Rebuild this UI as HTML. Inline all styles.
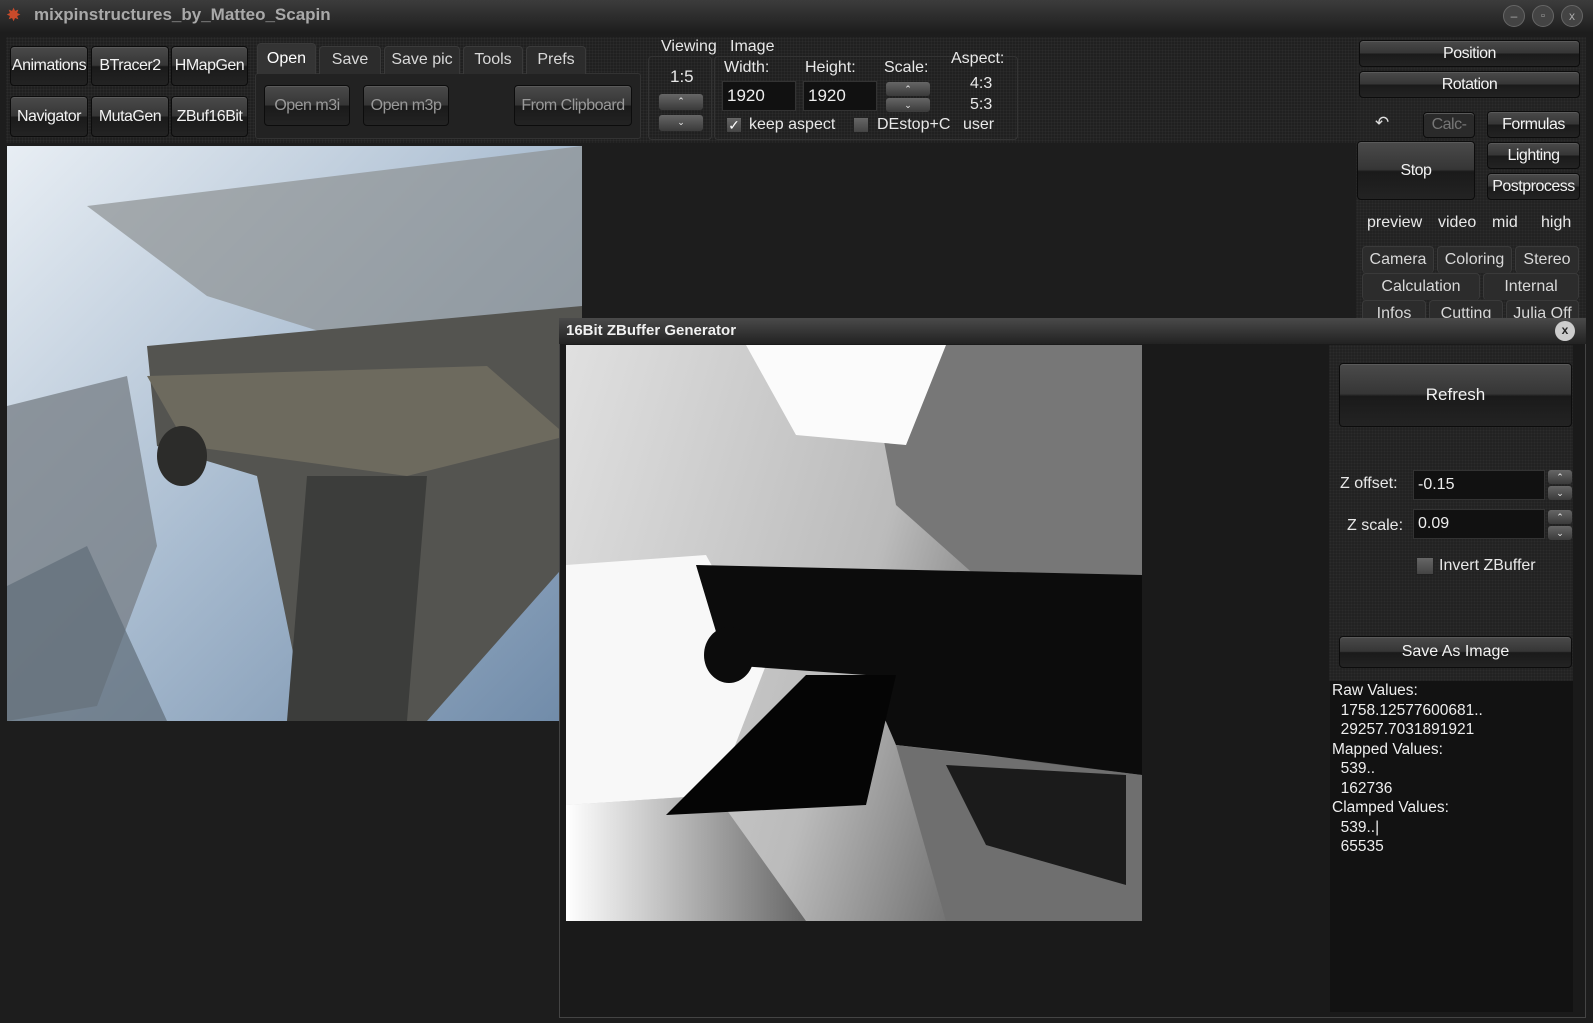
<!DOCTYPE html>
<html><head><meta charset="utf-8"><style>
*{box-sizing:border-box;margin:0;padding:0}
body{width:1593px;height:1023px;background:#1d1d1d;font-family:"Liberation Sans",sans-serif;color:#e8e8e8;position:relative;overflow:hidden;font-size:16px}
.a{position:absolute}
.btn{position:absolute;border:1px solid #0c0c0c;border-radius:4px;background:linear-gradient(#4a4a4a,#363636 48%,#1a1a1a 52%,#232323);color:#f2f2f2;text-align:center;font-size:16px;letter-spacing:-0.5px;box-shadow:inset 0 1px 0 #5a5a5a}
.dis{color:#8a8a8a}
.tab{position:absolute;background:#2c2c2c;border:1px solid #3a3a3a;border-bottom:none;border-radius:4px 4px 0 0;text-align:center;color:#d8d8d8;font-size:16px}
.inp{position:absolute;background:#111;border:1px solid #333;color:#eee;font-size:17px;padding-left:4px}
.pane{position:absolute;background:#232323;background-image:radial-gradient(#2b2b2b 1px,transparent 1px);background-size:3px 3px}
.sp{position:absolute;width:44px;height:14px;border-radius:3px;background:linear-gradient(#666,#3a3a3a);color:#eee;font-size:9px;text-align:center;line-height:14px}
.cb{position:absolute;width:16px;height:16px;background:linear-gradient(#666,#444);border:1px solid #222}
</style></head><body>
<!-- title bar -->
<div class="a" style="left:0;top:0;width:1593px;height:32px;background:linear-gradient(#3c3c3c,#1e1e1e)"></div>
<div class="a" style="left:6px;top:6px;width:20px;height:18px;color:#c84a2a;font-size:18px;line-height:18px">✸</div>
<div class="a" style="left:34px;top:5px;font-size:17px;font-weight:bold;color:#a9a9a9">mixpinstructures_by_Matteo_Scapin</div>
<div class="a" style="left:1503px;top:5px;width:22px;height:22px;border-radius:11px;background:#444;border:1px solid #666;color:#aaa;font-size:12px;text-align:center;line-height:20px">–</div>
<div class="a" style="left:1532px;top:5px;width:22px;height:22px;border-radius:11px;background:#444;border:1px solid #666;color:#aaa;font-size:11px;text-align:center;line-height:20px">▫</div>
<div class="a" style="left:1561px;top:5px;width:22px;height:22px;border-radius:11px;background:#444;border:1px solid #666;color:#aaa;font-size:12px;text-align:center;line-height:20px">x</div>
<!-- toolbar -->
<div class="pane" style="left:6px;top:37px;width:1350px;height:106px;background-color:#202020"></div>
<div class="btn" style="left:10px;top:46px;width:78px;height:40px;line-height:38px">Animations</div>
<div class="btn" style="left:91px;top:46px;width:78px;height:40px;line-height:38px">BTracer2</div>
<div class="btn" style="left:171px;top:46px;width:77px;height:40px;line-height:38px">HMapGen</div>
<div class="btn" style="left:10px;top:96px;width:78px;height:41px;line-height:39px">Navigator</div>
<div class="btn" style="left:91px;top:96px;width:78px;height:41px;line-height:39px">MutaGen</div>
<div class="btn" style="left:171px;top:96px;width:77px;height:41px;line-height:39px">ZBuf16Bit</div>
<div class="a" style="left:255px;top:73px;width:386px;height:66px;border:1px solid #333;border-radius:3px;background:#222"></div>
<div class="tab" style="left:257px;top:43px;width:59px;height:31px;line-height:30px;background:#343434;color:#fff">Open</div>
<div class="tab" style="left:319px;top:46px;width:62px;height:28px;line-height:26px">Save</div>
<div class="tab" style="left:384px;top:46px;width:76px;height:28px;line-height:26px">Save pic</div>
<div class="tab" style="left:463px;top:46px;width:60px;height:28px;line-height:26px">Tools</div>
<div class="tab" style="left:526px;top:46px;width:60px;height:28px;line-height:26px">Prefs</div>
<div class="btn dis" style="left:264px;top:85px;width:86px;height:41px;line-height:39px;color:#999">Open m3i</div>
<div class="btn dis" style="left:363px;top:85px;width:86px;height:41px;line-height:39px;color:#999">Open m3p</div>
<div class="btn dis" style="left:514px;top:85px;width:118px;height:41px;line-height:39px;color:#999">From Clipboard</div>
<!-- viewing -->
<div class="a" style="left:648px;top:56px;width:64px;height:84px;border:1px solid #333;border-radius:4px"></div>
<div class="a" style="left:714px;top:56px;width:304px;height:84px;border:1px solid #333;border-radius:4px"></div>
<div class="a" style="left:661px;top:38px;font-size:16px">Viewing</div>
<div class="a" style="left:730px;top:38px;font-size:16px">Image</div>
<div class="a" style="left:670px;top:67px;font-size:17px">1:5</div>
<div class="sp" style="left:659px;top:94px;height:16px">⌃</div>
<div class="sp" style="left:659px;top:115px;height:16px">⌄</div>
<div class="a" style="left:724px;top:59px">Width:</div>
<div class="a" style="left:805px;top:59px">Height:</div>
<div class="a" style="left:884px;top:59px">Scale:</div>
<div class="a" style="left:951px;top:50px">Aspect:</div>
<div class="inp" style="left:722px;top:81px;width:74px;height:30px;line-height:28px">1920</div>
<div class="inp" style="left:803px;top:81px;width:74px;height:30px;line-height:28px">1920</div>
<div class="sp" style="left:886px;top:82px">⌃</div>
<div class="sp" style="left:886px;top:98px">⌄</div>
<div class="a" style="left:970px;top:75px">4:3</div>
<div class="a" style="left:970px;top:96px">5:3</div>
<div class="cb" style="left:726px;top:117px;color:#fff;font-size:14px;line-height:14px;text-align:center">✓</div>
<div class="a" style="left:749px;top:116px">keep aspect</div>
<div class="cb" style="left:853px;top:117px"></div>
<div class="a" style="left:877px;top:116px">DEstop+C</div>
<div class="a" style="left:963px;top:116px">user</div>
<!-- right panel -->
<div class="pane" style="left:1356px;top:37px;width:230px;height:300px;background-color:#222"></div>
<div class="btn" style="left:1359px;top:40px;width:221px;height:27px;line-height:25px">Position</div>
<div class="btn" style="left:1359px;top:71px;width:221px;height:27px;line-height:25px">Rotation</div>
<div class="a" style="left:1375px;top:113px;color:#ddd;font-size:17px">↶</div>
<div class="btn" style="left:1423px;top:112px;width:52px;height:26px;line-height:24px;color:#777;background:#2a2a2a">Calc-</div>
<div class="btn" style="left:1487px;top:111px;width:93px;height:27px;line-height:25px">Formulas</div>
<div class="btn" style="left:1357px;top:141px;width:118px;height:59px;line-height:57px">Stop</div>
<div class="btn" style="left:1487px;top:142px;width:93px;height:27px;line-height:25px">Lighting</div>
<div class="btn" style="left:1487px;top:173px;width:93px;height:27px;line-height:25px">Postprocess</div>
<div class="a" style="left:1367px;top:214px">preview</div>
<div class="a" style="left:1438px;top:214px">video</div>
<div class="a" style="left:1492px;top:214px">mid</div>
<div class="a" style="left:1541px;top:214px">high</div>
<div class="tab" style="left:1362px;top:246px;width:72px;height:27px;line-height:26px;border-radius:4px">Camera</div>
<div class="tab" style="left:1437px;top:246px;width:75px;height:27px;line-height:26px;border-radius:4px">Coloring</div>
<div class="tab" style="left:1515px;top:246px;width:64px;height:27px;line-height:26px;border-radius:4px">Stereo</div>
<div class="tab" style="left:1362px;top:273px;width:118px;height:27px;line-height:26px;border-radius:4px">Calculation</div>
<div class="tab" style="left:1483px;top:273px;width:96px;height:27px;line-height:26px;border-radius:4px">Internal</div>
<div class="tab" style="left:1362px;top:300px;width:64px;height:27px;line-height:26px">Infos</div>
<div class="tab" style="left:1429px;top:300px;width:74px;height:27px;line-height:26px">Cutting</div>
<div class="tab" style="left:1506px;top:300px;width:73px;height:27px;line-height:26px">Julia Off</div>
<!-- left render -->
<svg class="a" style="left:7px;top:146px" width="575" height="575" viewBox="0 0 575 575">
<defs><linearGradient id="sky" x1="0" y1="0" x2="1" y2="1"><stop offset="0" stop-color="#e8eef4"/><stop offset="0.5" stop-color="#a9bcd0"/><stop offset="1" stop-color="#6f8aa8"/></linearGradient></defs>
<rect width="575" height="575" fill="url(#sky)"/>
<polygon points="80,60 575,0 575,240 360,200 200,150" fill="#8d9193" opacity="0.7"/>
<polygon points="140,200 575,160 575,400 420,575 300,575 250,330 150,300" fill="#545450"/>
<polygon points="140,230 480,220 560,290 400,330 180,300" fill="#6d6a5e"/>
<polygon points="0,260 120,230 150,400 90,560 0,575" fill="#7a828a" opacity="0.8"/>
<polygon points="0,440 80,400 160,575 0,575" fill="#5f6c78" opacity="0.7"/>
<ellipse cx="175" cy="310" rx="25" ry="30" fill="#2c2c2a"/>
<polygon points="300,330 420,330 400,575 280,575" fill="#3c3d3b"/>
</svg>
<!-- dialog -->
<div class="a" style="left:559px;top:318px;width:1027px;height:700px;background:#1a1a1a;border:1px solid #444"></div>
<div class="a" style="left:559px;top:318px;width:1027px;height:26px;background:linear-gradient(#4a4a4a,#222)"></div>
<div class="a" style="left:566px;top:322px;font-size:15px;font-weight:bold;color:#f0f0f0">16Bit ZBuffer Generator</div>
<div class="a" style="left:1555px;top:321px;width:20px;height:20px;border-radius:10px;background:#ccc;color:#222;font-size:12px;font-weight:bold;text-align:center;line-height:19px">x</div>
<svg class="a" style="left:566px;top:345px" width="576" height="576" viewBox="0 0 576 576">
<defs><linearGradient id="zg" x1="0" y1="0" x2="1" y2="0.3"><stop offset="0" stop-color="#e0e0e0"/><stop offset="0.6" stop-color="#bbb"/><stop offset="1" stop-color="#555"/></linearGradient>
<linearGradient id="zg2" x1="0" y1="0" x2="1" y2="0"><stop offset="0" stop-color="#fff"/><stop offset="1" stop-color="#666"/></linearGradient></defs>
<rect width="576" height="576" fill="url(#zg)"/>
<polygon points="300,0 576,0 576,260 420,240 330,160" fill="#777"/>
<polygon points="180,0 380,0 340,100 230,90" fill="#fbfbfb"/>
<polygon points="0,220 140,210 200,320 150,450 0,460" fill="#f8f8f8"/>
<polygon points="0,460 150,450 240,576 0,576" fill="url(#zg2)"/>
<polygon points="130,220 576,230 576,430 420,410 330,400 300,330 160,320" fill="#0c0c0c"/>
<ellipse cx="163" cy="310" rx="25" ry="28" fill="#0c0c0c"/>
<polygon points="240,330 330,330 300,460 100,470" fill="#050505"/>
<polygon points="330,400 576,430 576,576 380,576" fill="#6f6f6f"/>
<polygon points="380,420 560,430 560,540 420,500" fill="#1b1b1b"/>
</svg>
<div class="pane" style="left:1329px;top:345px;width:244px;height:336px;background-color:#222"></div>
<div class="btn" style="left:1339px;top:363px;width:233px;height:64px;line-height:62px;font-size:17px;letter-spacing:0">Refresh</div>
<div class="a" style="left:1340px;top:475px;font-size:16px">Z offset:</div>
<div class="inp" style="left:1413px;top:470px;width:132px;height:30px;line-height:28px;font-size:16px">-0.15</div>
<div class="sp" style="left:1548px;top:470px;width:24px;height:14px">⌃</div>
<div class="sp" style="left:1548px;top:486px;width:24px;height:14px">⌄</div>
<div class="a" style="left:1347px;top:517px;font-size:16px">Z scale:</div>
<div class="inp" style="left:1413px;top:509px;width:132px;height:30px;line-height:28px;font-size:16px">0.09</div>
<div class="sp" style="left:1548px;top:510px;width:24px;height:14px">⌃</div>
<div class="sp" style="left:1548px;top:526px;width:24px;height:14px">⌄</div>
<div class="cb" style="left:1416px;top:557px;width:18px;height:18px"></div>
<div class="a" style="left:1439px;top:557px;font-size:16px">Invert ZBuffer</div>
<div class="btn" style="left:1339px;top:636px;width:233px;height:32px;line-height:30px;letter-spacing:0">Save As Image</div>
<div class="a" style="left:1330px;top:681px;width:243px;height:331px;background:#121212;font-size:15.5px;line-height:19.5px;color:#eee;padding-left:2px;white-space:pre">Raw Values:
  1758.12577600681..
  29257.7031891921
Mapped Values:
  539..
  162736
Clamped Values:
  539..|
  65535</div>
</body></html>
